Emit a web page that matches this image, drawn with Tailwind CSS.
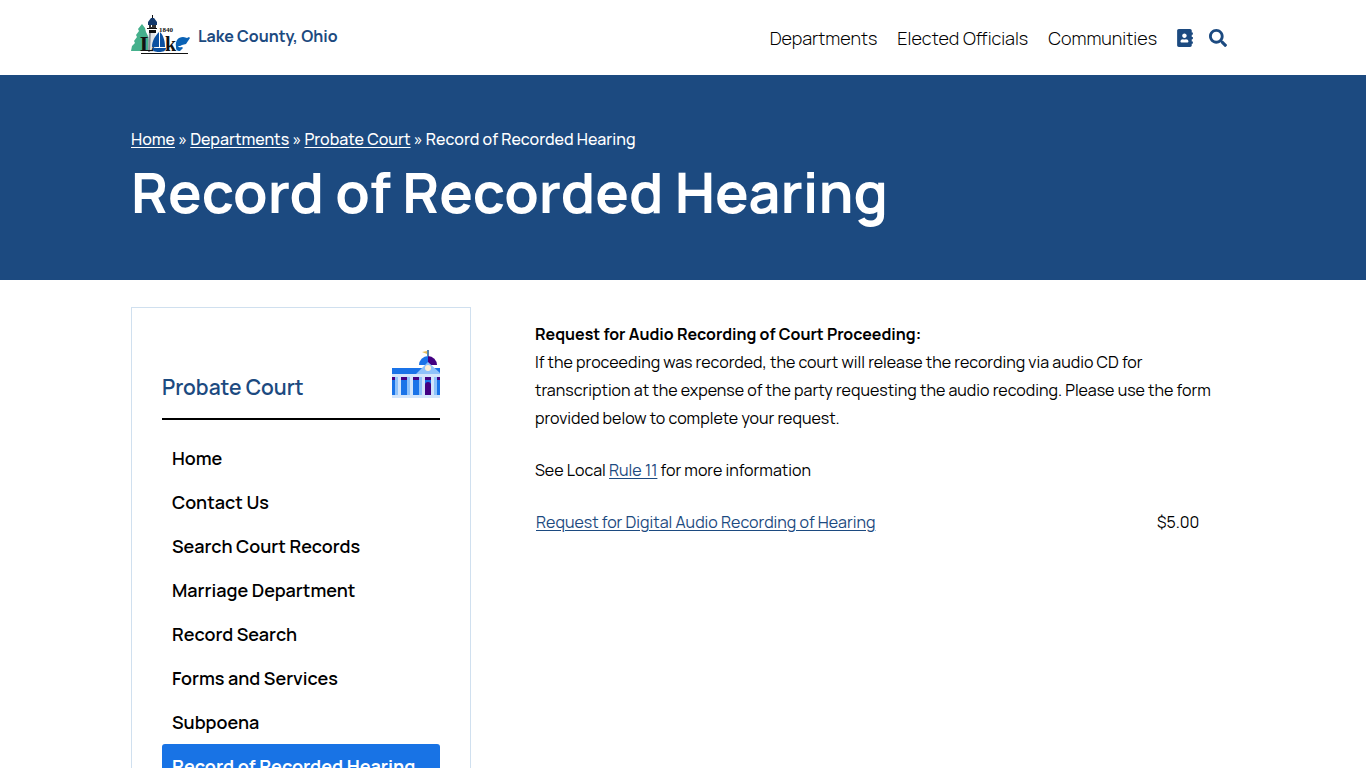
<!DOCTYPE html>
<html lang="en">
<head>
  <meta charset="UTF-8" />
  <meta name="viewport" content="width=device-width, initial-scale=1.0" />
  <title>Record of Recorded Hearing - Lake County, Ohio</title>
  <script src="https://cdn.jsdelivr.net/npm/@tailwindcss/browser@4"></script>
</head>
<body class="bg-white text-black font-['Manrope','Inter',sans-serif] overflow-x-hidden">

  <!-- Header -->
  <header class="h-[75px]">
    <div class="max-w-[1104px] h-full mx-auto flex items-center justify-between pr-2">
      <a href="/" class="flex items-center gap-2 pb-1 text-[#1c4a80]">
        <svg class="w-[59px] h-[42px]" viewBox="1 0 59 42" aria-hidden="true">
          <path fill="#45b08c" d="M12 9l3 4 1 4 2 4 1 4 2 4 1 7H1l1-5 3-3-1-2 3-4-1-2 3-4-1-2z" />
          <path fill="#e3e5e8" d="M19 17h6l1 20h-8z" />
          <path fill="#8b8f96" d="M19 17h2l-1 20h-2z" />
          <path fill="#111" d="M22 0h1v4h-1zM17 13h10v1H17zM19 15h7v3h-7z" />
          <path fill="#333" d="M19 9h7v4h-7z" />
          <path fill="#fff" d="M21 10h1v2h-1z" />
          <path fill="#12386b" d="M18 10V7l3-4h3l3 4v3z" />
          <text x="29" y="17" font-size="7" font-weight="700" font-family="Liberation Serif, serif" fill="#111">1840</text>
          <text x="10" y="36" font-size="22" font-weight="700" font-family="Liberation Serif, serif" fill="#111">L</text>
          <text x="35" y="36" font-size="20" font-weight="700" font-family="Liberation Serif, serif" fill="#111">k</text>
          <path fill="#0b50a0" d="M29 17c-4 4-7 9-7 15h7zM30 17c4 4 5 10 5 15h-5zM22 33h14c0 3-3 4-7 4s-6-1-7-4z" />
          <path fill="#0b62b5" d="M46 32c-1-6 2-10 7-10 2 0 3 1 4 1l2-1 1 1-2 3-2 3-4 1c-1 1-3 1-4 1 1 2 3 1 4 1l1 1-3 3c-3 0-4-1-4-4z" />
          <path fill="#111" d="M11 38h47v1H11z" />
        </svg>
        <span class="text-[16px] leading-6 font-bold">Lake County, Ohio</span>
      </a>
      <nav class="flex items-center gap-5 text-[18px] leading-6 font-light">
        <a href="/departments">Departments</a>
        <a href="/elected-officials">Elected Officials</a>
        <a href="/communities">Communities</a>
        <div class="flex items-center gap-4 text-[#1c4a80]">
          <a href="/directory" aria-label="Directory">
            <svg class="w-4 h-[18px]" viewBox="0 0 448 512" fill="currentColor">
              <path d="M436 160c6.600 0 12-5.400 12-12v-40c0-6.600-5.400-12-12-12h-20V48c0-26.500-21.500-48-48-48H48C21.500 0 0 21.500 0 48v416c0 26.500 21.500 48 48 48h320c26.500 0 48-21.500 48-48v-48h20c6.600 0 12-5.400 12-12v-40c0-6.600-5.400-12-12-12h-20v-64h20c6.600 0 12-5.400 12-12v-40c0-6.600-5.400-12-12-12h-20v-64h20zm-228-32c35.300 0 64 28.700 64 64s-28.700 64-64 64-64-28.700-64-64 28.700-64 64-64zm112 236.800c0 10.600-10 19.200-22.400 19.200H118.400C106 384 96 375.400 96 364.800v-19.200c0-31.800 30.100-57.600 67.200-57.600h5c12.300 5.100 25.700 8 39.800 8s27.600-2.900 39.800-8h5c37.100 0 67.200 25.800 67.200 57.600v19.200z" />
            </svg>
          </a>
          <button type="button" aria-label="Search">
            <svg class="w-[18px] h-[18px]" viewBox="0 0 512 512" fill="currentColor">
              <path d="M505 442.700L405.300 343c-4.500-4.500-10.600-7-17-7H372c27.600-35.300 44-79.700 44-128C416 93.100 322.900 0 208 0S0 93.100 0 208s93.100 208 208 208c48.300 0 92.700-16.400 128-44v16.300c0 6.400 2.500 12.500 7 17l99.700 99.700c9.400 9.400 24.600 9.400 33.900 0l28.300-28.300c9.400-9.400 9.400-24.600.1-34zM208 336c-70.700 0-128-57.200-128-128 0-70.700 57.200-128 128-128 70.700 0 128 57.200 128 128 0 70.700-57.200 128-128 128z" />
            </svg>
          </button>
        </div>
      </nav>
    </div>
  </header>

  <!-- Page title -->
  <section class="bg-[#1c4a80] text-white pt-[52px] pb-[47px]">
    <div class="max-w-[1104px] mx-auto">
      <p class="text-[16px] leading-6 font-medium">
        <a href="/" class="underline underline-offset-2">Home</a> »
        <a href="/departments" class="underline underline-offset-2">Departments</a> »
        <a href="/probate-court" class="underline underline-offset-2">Probate Court</a> »
        <span>Record of Recorded Hearing</span>
      </p>
      <h1 class="text-[56px] leading-[82px] font-bold">Record of Recorded Hearing</h1>
    </div>
  </section>

  <main class="max-w-[1104px] mx-auto pt-[27px] flex gap-16">
    <aside class="w-[340px] shrink-0 border border-[#d0e0ef] px-[30px] pt-[42px] pb-8">
      <div class="flex items-end justify-between border-b-2 border-black pb-5">
        <h2 class="text-[21px] leading-[22px] font-semibold text-[#1c4a80]">Probate Court</h2>
        <svg class="w-12 h-12" viewBox="0 0 48 48" aria-hidden="true">
          <path fill="#1a73e8" d="M0 18h48v6H0zM0 29h48v17H0z" />
          <path fill="#430082" d="M0 27h48v3H0z" />
          <path fill="#1a73e8" d="M27 15a9 9 0 0 1 9-9v9z" />
          <path fill="#430082" d="M36 6a9 9 0 0 1 9 9h-9z" />
          <path fill="#5985ad" d="M35 0h2v6h-2z" />
          <path fill="#e8bd55" d="M35 1v3l-5-2z" />
          <path fill="#8fc2fa" d="M36 12l12 11v1H24z" />
          <circle cx="36" cy="18" r="3" fill="#fff0d6" />
          <path fill="#8fc2fa" d="M3 27h3v18H3zM15 27h3v18h-3zM27 27h3v18h-3zM42 27h3v18h-3z" />
          <path fill="#d3e5fb" d="M0 24h48v3H0zM0 45h48v3H0zM6 27h3v18H6zM18 27h3v18h-3zM30 27h3v18h-3zM39 27h3v18h-3z" />
          <path fill="#1a73e8" d="M33 30h6v6h-6z" />
          <path fill="#430082" d="M33 45V35a3 3 0 0 1 6 0v10z" />
        </svg>
      </div>
      <ul class="pt-4 text-[18px] leading-7 font-semibold">
        <li><a href="#" class="block px-[10px] py-2">Home</a></li>
        <li><a href="#" class="block px-[10px] py-2">Contact Us</a></li>
        <li><a href="#" class="block px-[10px] py-2">Search Court Records</a></li>
        <li><a href="#" class="block px-[10px] py-2">Marriage Department</a></li>
        <li><a href="#" class="block px-[10px] py-2">Record Search</a></li>
        <li><a href="#" class="block px-[10px] py-2">Forms and Services</a></li>
        <li><a href="#" class="block px-[10px] py-2">Subpoena</a></li>
        <li><a href="#" class="block px-[10px] py-2 rounded-[3px] bg-[#1873e5] text-white font-bold whitespace-nowrap">Record of Recorded Hearing</a></li>
      </ul>
    </aside>

    <article class="flex-1 min-w-0 pt-[13px] text-[16px] leading-7">
      <p>
        <strong class="font-bold">Request for Audio Recording of Court Proceeding:</strong><br />
        If the proceeding was recorded, the court will release the recording via audio CD for transcription at the expense of the party requesting the audio recoding. Please use the form provided below to complete your request.
      </p>
      <p class="mt-6">See Local <a href="#" class="underline underline-offset-2 text-[#1c4a80]">Rule 11</a> for more information</p>
      <table class="w-full mt-6">
        <tbody>
          <tr>
            <td class="px-px"><a href="#" class="underline underline-offset-2 text-[#1c4a80]">Request for Digital Audio Recording of Hearing</a></td>
            <td class="w-[78px]">$5.00</td>
          </tr>
        </tbody>
      </table>
    </article>
  </main>

</body>
</html>
